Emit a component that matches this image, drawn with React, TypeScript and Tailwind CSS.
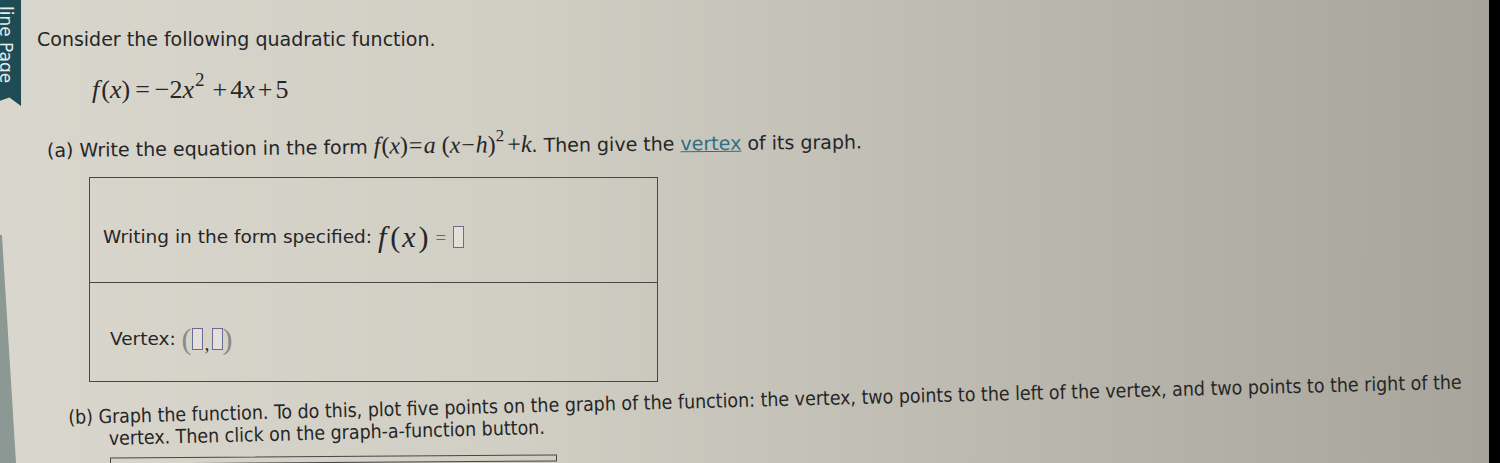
import React from "react";

function Box() {
  return (
    <span className="inline-block w-[11px] h-[22px] border-[1.5px] border-[#6a6c94] bg-[#e2e0d8] align-middle" />
  );
}

export default function App() {
  return (
    <div className="w-[1500px] h-[463px] overflow-hidden flex bg-black">
      <div className="relative flex-1 flex flex-col text-[#262626] bg-[linear-gradient(90deg,#d9d6cd_0%,#d1cec4_35%,#bdbbb1_65%,#a7a59b_100%)] font-['DejaVu_Sans',Verdana,sans-serif]">
        {/* left tab */}
        <div className="absolute top-0 left-0 w-[21px] h-[106px] bg-[#1f4b55] [clip-path:polygon(0_0,100%_0,100%_100%,45%_92%,0_95%)] overflow-hidden">
          <span className="absolute left-[-3px] top-[6px] [writing-mode:vertical-rl] text-[17px] leading-none text-[#e4ecec] whitespace-nowrap">
            line Page
          </span>
        </div>
        {/* left grey strip */}
        <div className="absolute top-[235px] left-0 w-[16px] h-[228px] bg-[#8b9894] [clip-path:polygon(0_0,12%_0,100%_100%,0_100%)]" />

        <p className="ml-[37px] mt-[28px] text-[19px] leading-[22px]">
          Consider the following quadratic function.
        </p>

        <p className="ml-[92px] mt-[25px] text-[26px] leading-[30px] font-['Liberation_Serif',serif] flex items-baseline whitespace-nowrap">
          <span className="italic">f</span>
          <span className="ml-[2px]">(</span>
          <span className="italic">x</span>
          <span>)</span>
          <span className="mx-[5px]">=</span>
          <span>−2</span>
          <span className="italic">x</span>
          <span className="relative -top-[12px] text-[19px] ml-[1px]">2</span>
          <span className="ml-[8px]">+</span>
          <span className="ml-[3px]">4</span>
          <span className="italic">x</span>
          <span className="ml-[3px]">+</span>
          <span className="ml-[3px]">5</span>
        </p>

        <p className="ml-[47px] mt-[29px] text-[19px] leading-[26px] origin-left -rotate-[0.6deg] whitespace-nowrap flex items-baseline">
          <span>(a) Write the equation in the form&nbsp;</span>
          <span className="font-['Liberation_Serif',serif] text-[24px] flex items-baseline">
            <span className="italic">f</span>
            <span className="ml-[1px]">(</span>
            <span className="italic">x</span>
            <span>)</span>
            <span className="mx-[1px]">=</span>
            <span className="italic">a</span>
            <span className="ml-[6px]">(</span>
            <span className="italic">x</span>
            <span className="mx-[1px]">−</span>
            <span className="italic">h</span>
            <span>)</span>
            <span className="relative -top-[11px] text-[17px]">2</span>
            <span className="ml-[3px]">+</span>
            <span className="italic">k</span>
          </span>
          <span>. Then give the&nbsp;</span>
          <span className="text-[#2f6f86] underline">vertex</span>
          <span>&nbsp;of its graph.</span>
        </p>

        <div className="ml-[89px] mt-[12px] w-[569px] border-[1.5px] border-[#474747] flex flex-col">
          <div className="h-[104px] flex items-center pt-[14px] pl-[13px] text-[18.5px]">
            <span>Writing in the form specified:&nbsp;</span>
            <span className="font-['Liberation_Serif',serif] text-[30px] flex items-center leading-none">
              <span className="italic">f</span>
              <span className="ml-[4px]">(</span>
              <span className="italic ml-[2px]">x</span>
              <span className="ml-[3px]">)</span>
              <span className="mx-[7px] text-[19px] text-[#6a6a6a]">=</span>
            </span>
            <Box />
          </div>
          <div className="h-[99px] border-t-[1.5px] border-[#474747] flex items-center pt-[14px] pl-[20px] text-[18.5px]">
            <span>Vertex:&nbsp;</span>
            <span className="flex items-center text-[#8a8a8a] font-['Liberation_Serif',serif] text-[30px] leading-none">
              <span>(</span>
              <Box />
              <span className="text-[#333] text-[20px] mt-[8px] mx-[2px]">,</span>
              <Box />
              <span>)</span>
            </span>
          </div>
        </div>

        <p className="ml-[68px] mt-[25px] pl-[40px] -indent-[40px] text-[19.4px] leading-[22px] origin-top-left -rotate-[1.45deg] whitespace-nowrap font-['DejaVu_Sans_Condensed','DejaVu_Sans',sans-serif]">
          (b) Graph the function. To do this, plot five points on the graph of the function: the vertex, two points to the left of the vertex, and two points to the right of the
          <br />
          vertex. Then click on the graph-a-function button.
        </p>

        <div className="ml-[110px] mt-[5px] w-[447px] h-[20px] border-[1.5px] border-[#474747] -rotate-[0.4deg]" />
      </div>
      <div className="w-[11px] bg-black" />
    </div>
  );
}
